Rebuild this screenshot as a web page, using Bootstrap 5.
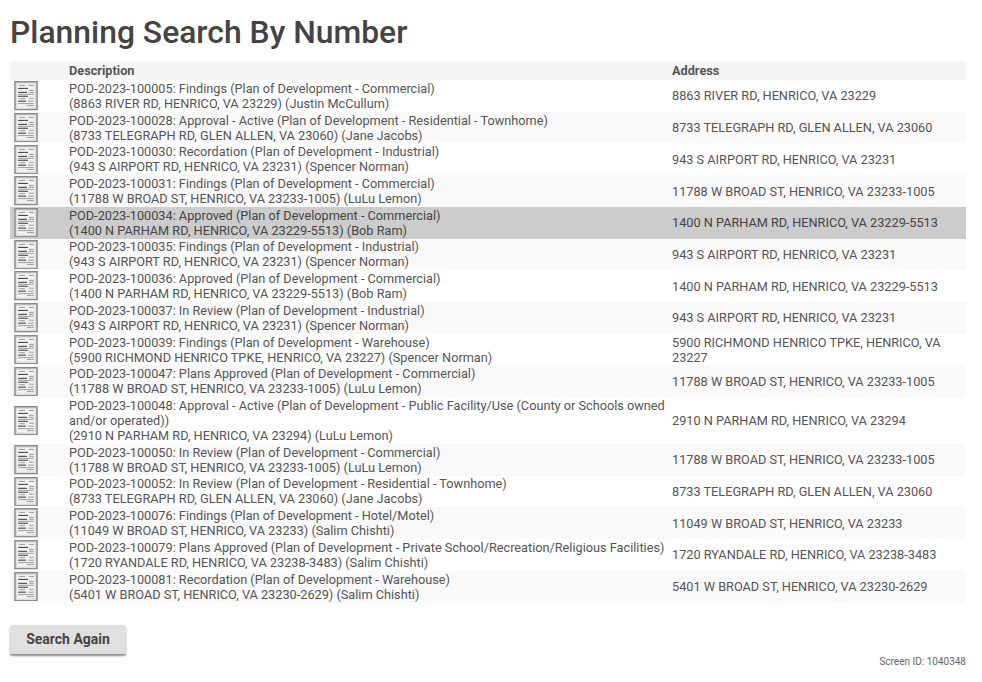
<!DOCTYPE html>
<html lang="en"><head><meta charset="utf-8"><title>Planning Search By Number</title>
<link href="https://cdn.jsdelivr.net/npm/bootstrap@5.3.0/dist/css/bootstrap.min.css" rel="stylesheet">
<style>
body{font-family:Roboto,"Liberation Sans",sans-serif;font-size:12px;color:#555;background:#fff;padding:0 16px 0 10px}
.ptitle{font-family:Roboto,sans-serif;font-size:31.85px;font-weight:500;color:#444;line-height:36px;margin:14px 0 11px}
.results{table-layout:fixed;width:956px;margin:0;font-size:12.72px;line-height:15px;color:#555}
.results th,.results td{padding:0;border:0;vertical-align:middle;background:transparent;box-shadow:none;color:inherit}
.results thead th{background:#f5f5f5;font-weight:700;color:#555;height:19px;padding:0 0 1px}
.results td{padding:.86px 0}
.results tbody tr:nth-child(even) td{background:#f9f9f9}
.results tbody tr.picked td{background:#ccc;color:#444}
.c-ico{width:59px}.c-desc{width:603px}.c-addr{width:294px}
.docico{display:block;margin-left:4px;width:24px;height:29.5px}
.againbtn{margin-top:22.5px;width:116px;height:29px;padding:0;background:#e0e0e0;border:0;border-radius:2px;font-size:14px;font-weight:700;color:#444;box-shadow:0 2px 2px rgba(0,0,0,.45)}
.againbtn:hover{background:#d5d5d5;color:#444}
.screenid{font-size:10px;color:#666;line-height:12px;margin-top:2px}
</style></head><body>
<svg width="0" height="0" class="d-block"><defs><symbol id="doc" viewBox="0 0 24 30">
<rect x=".75" y=".75" width="22.500" height="28.500" fill="#dedede" stroke="#8a8a8a" stroke-width="1.500"/><rect x="3" y="3" width="18" height="24" fill="#f2f2f2"/>
<g stroke="#333" stroke-width="1"><path d="M4 7.500h10M4 11.500h9M4 15.500h10M4 20.500h8"/></g>
<g stroke="#999" stroke-width="1"><path d="M5 4.500h6M15 4.500h5M15 9.500h5M15 11.500h5M4 13.500h16M15 17.500h5M5 18h6M14 20.500h6M4 23h16M13 25h7"/></g>
</symbol></defs></svg>
<h1 class="ptitle">Planning Search By Number</h1>
<table class="table results" id="t"><colgroup><col class="c-ico"><col class="c-desc"><col class="c-addr"></colgroup>
<thead><tr><th></th><th>Description</th><th>Address</th></tr></thead>
<tbody>
<tr><td><svg class="docico"><use href="#doc"/></svg></td><td>POD-2023-100005: Findings (Plan of Development - Commercial)<br>(8863 RIVER RD, HENRICO, VA 23229) (Justin McCullum)</td><td>8863 RIVER RD, HENRICO, VA 23229</td></tr>
<tr><td><svg class="docico"><use href="#doc"/></svg></td><td>POD-2023-100028: Approval - Active (Plan of Development - Residential - Townhome)<br>(8733 TELEGRAPH RD, GLEN ALLEN, VA 23060) (Jane Jacobs)</td><td>8733 TELEGRAPH RD, GLEN ALLEN, VA 23060</td></tr>
<tr><td><svg class="docico"><use href="#doc"/></svg></td><td>POD-2023-100030: Recordation (Plan of Development - Industrial)<br>(943 S AIRPORT RD, HENRICO, VA 23231) (Spencer Norman)</td><td>943 S AIRPORT RD, HENRICO, VA 23231</td></tr>
<tr><td><svg class="docico"><use href="#doc"/></svg></td><td>POD-2023-100031: Findings (Plan of Development - Commercial)<br>(11788 W BROAD ST, HENRICO, VA 23233-1005) (LuLu Lemon)</td><td>11788 W BROAD ST, HENRICO, VA 23233-1005</td></tr>
<tr class="picked"><td><svg class="docico"><use href="#doc"/></svg></td><td>POD-2023-100034: Approved (Plan of Development - Commercial)<br>(1400 N PARHAM RD, HENRICO, VA 23229-5513) (Bob Ram)</td><td>1400 N PARHAM RD, HENRICO, VA 23229-5513</td></tr>
<tr><td><svg class="docico"><use href="#doc"/></svg></td><td>POD-2023-100035: Findings (Plan of Development - Industrial)<br>(943 S AIRPORT RD, HENRICO, VA 23231) (Spencer Norman)</td><td>943 S AIRPORT RD, HENRICO, VA 23231</td></tr>
<tr><td><svg class="docico"><use href="#doc"/></svg></td><td>POD-2023-100036: Approved (Plan of Development - Commercial)<br>(1400 N PARHAM RD, HENRICO, VA 23229-5513) (Bob Ram)</td><td>1400 N PARHAM RD, HENRICO, VA 23229-5513</td></tr>
<tr><td><svg class="docico"><use href="#doc"/></svg></td><td>POD-2023-100037: In Review (Plan of Development - Industrial)<br>(943 S AIRPORT RD, HENRICO, VA 23231) (Spencer Norman)</td><td>943 S AIRPORT RD, HENRICO, VA 23231</td></tr>
<tr><td><svg class="docico"><use href="#doc"/></svg></td><td>POD-2023-100039: Findings (Plan of Development - Warehouse)<br>(5900 RICHMOND HENRICO TPKE, HENRICO, VA 23227) (Spencer Norman)</td><td>5900 RICHMOND HENRICO TPKE, HENRICO, VA 23227</td></tr>
<tr><td><svg class="docico"><use href="#doc"/></svg></td><td>POD-2023-100047: Plans Approved (Plan of Development - Commercial)<br>(11788 W BROAD ST, HENRICO, VA 23233-1005) (LuLu Lemon)</td><td>11788 W BROAD ST, HENRICO, VA 23233-1005</td></tr>
<tr><td><svg class="docico"><use href="#doc"/></svg></td><td>POD-2023-100048: Approval - Active (Plan of Development - Public Facility/Use (County or Schools owned and/or operated))<br>(2910 N PARHAM RD, HENRICO, VA 23294) (LuLu Lemon)</td><td>2910 N PARHAM RD, HENRICO, VA 23294</td></tr>
<tr><td><svg class="docico"><use href="#doc"/></svg></td><td>POD-2023-100050: In Review (Plan of Development - Commercial)<br>(11788 W BROAD ST, HENRICO, VA 23233-1005) (LuLu Lemon)</td><td>11788 W BROAD ST, HENRICO, VA 23233-1005</td></tr>
<tr><td><svg class="docico"><use href="#doc"/></svg></td><td>POD-2023-100052: In Review (Plan of Development - Residential - Townhome)<br>(8733 TELEGRAPH RD, GLEN ALLEN, VA 23060) (Jane Jacobs)</td><td>8733 TELEGRAPH RD, GLEN ALLEN, VA 23060</td></tr>
<tr><td><svg class="docico"><use href="#doc"/></svg></td><td>POD-2023-100076: Findings (Plan of Development - Hotel/Motel)<br>(11049 W BROAD ST, HENRICO, VA 23233) (Salim Chishti)</td><td>11049 W BROAD ST, HENRICO, VA 23233</td></tr>
<tr><td><svg class="docico"><use href="#doc"/></svg></td><td>POD-2023-100079: Plans Approved (Plan of Development - Private School/Recreation/Religious Facilities)<br>(1720 RYANDALE RD, HENRICO, VA 23238-3483) (Salim Chishti)</td><td>1720 RYANDALE RD, HENRICO, VA 23238-3483</td></tr>
<tr><td><svg class="docico"><use href="#doc"/></svg></td><td>POD-2023-100081: Recordation (Plan of Development - Warehouse)<br>(5401 W BROAD ST, HENRICO, VA 23230-2629) (Salim Chishti)</td><td>5401 W BROAD ST, HENRICO, VA 23230-2629</td></tr>
</tbody></table>
<button type="button" class="btn againbtn d-block">Search Again</button>
<div class="screenid text-end">Screen ID: 1040348</div>
</body></html>
